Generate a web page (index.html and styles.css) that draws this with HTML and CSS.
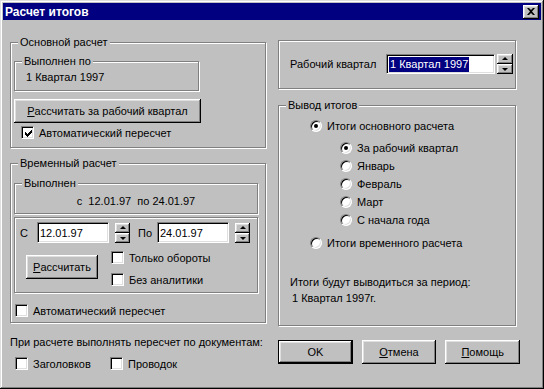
FILE: index.html
```html
<!DOCTYPE html>
<html lang="ru">
<head>
    <meta charset="UTF-8">
    <title>Расчет итогов</title>
    <link rel="stylesheet" href="styles.css">
</head>
<body>

<div class="window">
    <div class="titlebar">
        <span class="title">Расчет итогов</span>
        <span class="close-btn">
            <svg width="8" height="7" viewBox="0 0 8 7"><path d="M0 0h2l2 2 2-2h2L5 3.5 8 7H6L4 5 2 7H0l3-3.5z" fill="#000"/></svg>
        </span>
    </div>

    <div class="content">
        <!-- левая колонка -->
        <div class="col-left">
            <div class="group group-main">
                <span class="group-title">Основной расчет</span>
                <div class="group group-done">
                    <span class="group-title">Выполнен по</span>
                    1 Квартал 1997
                </div>
                <button class="btn btn-quarter"><u>Р</u>ассчитать за рабочий квартал</button>
                <div class="check check-auto1">
                    <span class="box">
                        <svg width="7" height="7" viewBox="0 0 7 7" shape-rendering="crispEdges" fill="#000">
                            <rect x="0" y="2" width="1" height="3"/><rect x="1" y="3" width="1" height="3"/>
                            <rect x="2" y="4" width="1" height="3"/><rect x="3" y="3" width="1" height="3"/>
                            <rect x="4" y="2" width="1" height="3"/><rect x="5" y="1" width="1" height="3"/>
                            <rect x="6" y="0" width="1" height="3"/>
                        </svg>
                    </span>
                    Автоматический пересчет
                </div>
            </div>

            <div class="group group-temp">
                <span class="group-title">Временный расчет</span>
                <div class="group group-done2">
                    <span class="group-title">Выполнен</span>
                    <span class="period-text">с  12.01.97  по 24.01.97</span>
                </div>
                <div class="group period-box">
                    <div class="period-row">
                        <span class="lbl-from">С</span>
                        <span class="field field-date">12.01.97</span>
                        <span class="spin"><span class="spin-btn up"></span><span class="spin-btn down"></span></span>
                        <span class="lbl-to">По</span>
                        <span class="field field-date">24.01.97</span>
                        <span class="spin"><span class="spin-btn up"></span><span class="spin-btn down"></span></span>
                    </div>
                    <div class="period-actions">
                        <button class="btn btn-calc"><u>Р</u>ассчитать</button>
                        <div class="check-list">
                            <div class="check"><span class="box"></span>Только обороты</div>
                            <div class="check"><span class="box"></span>Без аналитики</div>
                        </div>
                    </div>
                </div>
                <div class="check check-auto2"><span class="box"></span>Автоматический пересчет</div>
            </div>

            <div class="note">При расчете выполнять пересчет по документам:</div>
            <div class="doc-checks">
                <div class="check check-head"><span class="box"></span>Заголовков</div>
                <div class="check"><span class="box"></span>Проводок</div>
            </div>
        </div>

        <!-- правая колонка -->
        <div class="col-right">
            <div class="group group-quarter">
                <span class="quarter-label">Рабочий квартал</span>
                <span class="field field-quarter"><span class="selected">1 Квартал 1997</span></span>
                <span class="spin spin-quarter"><span class="spin-btn up"></span><span class="spin-btn down"></span></span>
            </div>

            <div class="group group-output">
                <span class="group-title">Вывод итогов</span>
                <div class="radio-row"><span class="radio checked"></span>Итоги основного расчета</div>
                <div class="sub-list">
                    <div class="radio-row"><span class="radio checked"></span>За рабочий квартал</div>
                    <div class="radio-row"><span class="radio"></span>Январь</div>
                    <div class="radio-row"><span class="radio"></span>Февраль</div>
                    <div class="radio-row"><span class="radio"></span>Март</div>
                    <div class="radio-row"><span class="radio"></span>С начала года</div>
                </div>
                <div class="radio-row radio-temp"><span class="radio"></span>Итоги временного расчета</div>
                <div class="period-note">
                    Итоги будут выводиться за период:<br>
                    <span class="period-value">1 Квартал 1997г.</span>
                </div>
            </div>

            <div class="actions">
                <button class="btn btn-dialog btn-default">OK</button>
                <button class="btn btn-dialog"><u>О</u>тмена</button>
                <button class="btn btn-dialog"><u>П</u>омощь</button>
            </div>
        </div>
    </div>
</div>

</body>
</html>
```

FILE: styles.css
```css
:root {
    --face: #c0c0c0;
    --shadow: #808080;
    --light: #dfdfdf;
    --title: #000080;
    --font-family: "Liberation Sans", Arial, sans-serif;
}
body {
    margin: 0;
    font-family: var(--font-family);
    font-size: 11px;
    color: #000;
    background-color: var(--face);
}
.window {
    width: 544px;
    height: 389px;
    box-sizing: border-box;
    padding: 3px;
    background-color: var(--face);
    box-shadow: inset -1px -1px #000, inset 1px 1px var(--light), inset -2px -2px var(--shadow), inset 2px 2px #fff;
}
.titlebar {
    height: 17px;
    background-color: var(--title);
    color: #fff;
    display: flex;
    align-items: center;
    justify-content: space-between;
    padding-left: 2px;
}
.title {
    font-weight: bold;
    font-size: 12px;
}
.close-btn {
    width: 16px;
    height: 14px;
    margin-right: 2px;
    box-sizing: border-box;
    background-color: var(--face);
    display: flex;
    align-items: center;
    justify-content: center;
    box-shadow: inset -1px -1px #000, inset 1px 1px #fff, inset -2px -2px var(--shadow), inset 2px 2px var(--light);
}
.content {
    display: flex;
    gap: 12px;
    padding-left: 7px;
}
.col-left {
    width: 256px;
    display: flex;
    flex-direction: column;
}
.col-right {
    width: 242px;
    display: flex;
    flex-direction: column;
}

/* рамки групп */
.group {
    position: relative;
    box-sizing: border-box;
    border: 1px solid var(--shadow);
    box-shadow: inset 1px 1px #fff, 1px 1px #fff;
}
.group-title {
    position: absolute;
    top: -8px;
    left: 7px;
    padding: 0 2px;
    line-height: 14px;
    background-color: var(--face);
    white-space: nowrap;
}

/* кнопки */
.btn {
    box-sizing: border-box;
    display: flex;
    align-items: center;
    justify-content: center;
    font: inherit;
    color: #000;
    background-color: var(--face);
    border: none;
    padding: 0;
    box-shadow: inset -1px -1px #000, inset 1px 1px #fff, inset -2px -2px var(--shadow), inset 2px 2px var(--light);
}
.btn-default {
    box-shadow: inset 0 0 0 1px #000, inset -2px -2px #000, inset 2px 2px #fff, inset -3px -3px var(--shadow), inset 3px 3px var(--light);
}

/* флажки и переключатели */
.check {
    display: flex;
    align-items: center;
    gap: 5px;
    height: 13px;
    white-space: nowrap;
}
.box {
    flex: none;
    width: 13px;
    height: 13px;
    box-sizing: border-box;
    background-color: #fff;
    border: 1px solid;
    border-color: var(--shadow) #fff #fff var(--shadow);
    box-shadow: inset 1px 1px #000, inset -1px -1px var(--light);
    display: flex;
    align-items: center;
    justify-content: center;
}
.box svg {
    margin: 1px 0 0 1px;
}
.radio-row {
    display: flex;
    align-items: center;
    gap: 5px;
    height: 14px;
    white-space: nowrap;
}
.radio {
    flex: none;
    position: relative;
    width: 12px;
    height: 12px;
    box-sizing: border-box;
    border-radius: 50%;
    background-color: #fff;
    border: 1px solid;
    border-color: var(--shadow) #fff #fff var(--shadow);
    box-shadow: inset 1px 1px #000, inset -1px -1px var(--light);
}
.radio.checked::after {
    content: "";
    position: absolute;
    left: 3px;
    top: 3px;
    width: 4px;
    height: 4px;
    border-radius: 50%;
    background-color: #000;
}

/* поля и счетчики */
.field {
    box-sizing: border-box;
    display: flex;
    align-items: center;
    background-color: #fff;
    border: 1px solid;
    border-color: var(--shadow) #fff #fff var(--shadow);
    box-shadow: inset 1px 1px #000, inset -1px -1px var(--light);
    padding-left: 2px;
}
.spin {
    flex: none;
    display: flex;
    flex-direction: column;
    width: 15px;
    height: 20px;
}
.spin-btn {
    position: relative;
    height: 10px;
    box-sizing: border-box;
    box-shadow: inset -1px -1px #000, inset 1px 1px #fff, inset -2px -2px var(--shadow), inset 2px 2px var(--light);
}
.spin-btn::after {
    content: "";
    position: absolute;
    left: 50%;
    top: 4px;
    margin-left: -3px;
    border-left: 3px solid transparent;
    border-right: 3px solid transparent;
}
.spin-btn.up::after {
    top: 3px;
    border-bottom: 3px solid #000;
}
.spin-btn.down::after {
    border-top: 3px solid #000;
}

/* основной расчет */
.group-main {
    margin-top: 22px;
    height: 106px;
    padding: 18px 0 0 3px;
}
.group-done {
    width: 185px;
    height: 30px;
    padding: 8px 0 0 11px;
    line-height: 14px;
}
.btn-quarter {
    margin-top: 8px;
    width: 187px;
    height: 24px;
}
.check-auto1 {
    margin: 3px 0 0 7px;
}

/* временный расчет */
.group-temp {
    margin-top: 15px;
    height: 160px;
    padding: 19px 0 0 3px;
}
.group-done2 {
    width: 244px;
    height: 31px;
    padding-top: 10px;
    line-height: 14px;
    text-align: center;
}
.period-text {
    white-space: pre;
}
.period-box {
    margin-top: 3px;
    width: 244px;
    height: 76px;
    padding: 4px 0 0 5px;
}
.period-row {
    display: flex;
    align-items: center;
    height: 21px;
}
.lbl-from {
    width: 17px;
}
.field-date {
    width: 72px;
    height: 21px;
}
.period-row .spin {
    margin-left: 6px;
}
.lbl-to {
    width: 19px;
    margin-left: 8px;
}
.period-actions {
    display: flex;
    margin-top: 8px;
}
.btn-calc {
    margin: 4px 0 0 6px;
    width: 72px;
    height: 24px;
}
.check-list {
    margin-left: 13px;
    display: flex;
    flex-direction: column;
    gap: 9px;
}
.check-auto2 {
    margin: 11px 0 0 1px;
}
.note {
    margin-top: 12px;
    line-height: 14px;
    white-space: nowrap;
}
.doc-checks {
    display: flex;
    margin-top: 8px;
    padding-left: 5px;
}
.check-head {
    width: 95px;
}

/* правая часть */
.group-quarter {
    margin-top: 20px;
    width: 238px;
    height: 49px;
    padding: 13px 0 0 11px;
    display: flex;
    align-items: flex-start;
}
.quarter-label {
    width: 96px;
    line-height: 20px;
}
.field-quarter {
    width: 109px;
    height: 20px;
}
.selected {
    background-color: var(--title);
    color: #fff;
    line-height: 15px;
    padding: 0 1px;
}
.spin-quarter {
    margin-left: 2px;
    width: 16px;
}
.group-output {
    margin-top: 16px;
    width: 238px;
    height: 221px;
    padding: 13px 0 0 31px;
}
.sub-list {
    margin: 8px 0 0 30px;
    display: flex;
    flex-direction: column;
    gap: 4px;
}
.radio-temp {
    margin-top: 9px;
}
.period-note {
    margin: 24px 0 0 -20px;
    line-height: 16px;
    white-space: nowrap;
}
.period-value {
    margin-left: 2px;
}
.actions {
    margin-top: 14px;
    display: flex;
    gap: 9px;
}
.btn-dialog {
    width: 75px;
    height: 24px;
}
```
